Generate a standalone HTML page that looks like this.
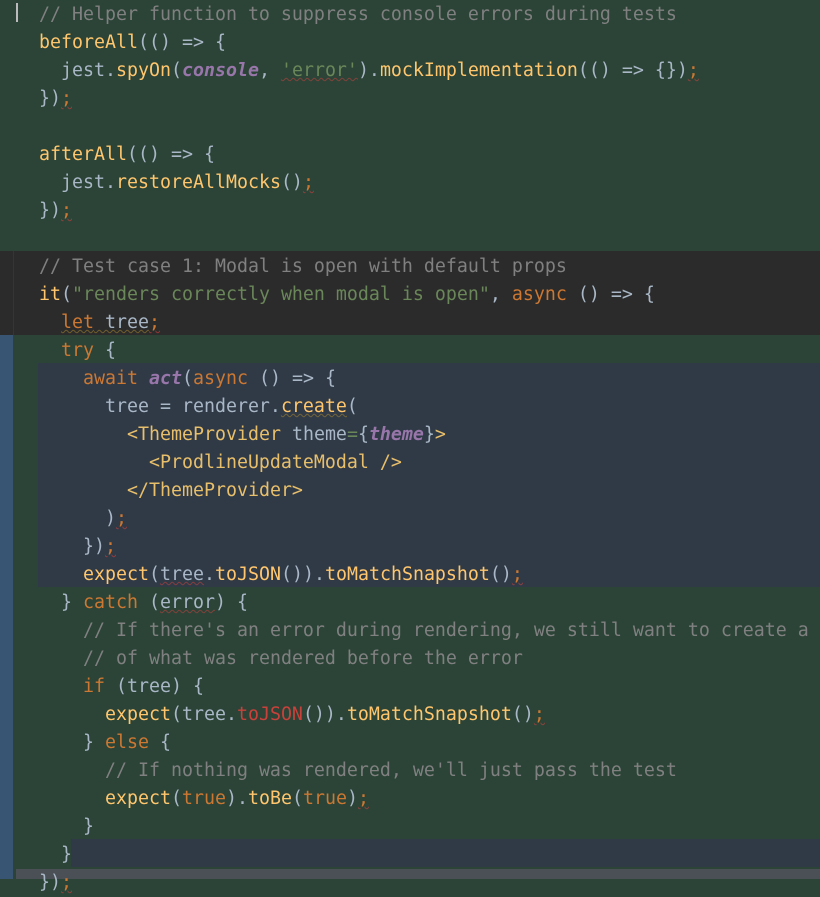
<!DOCTYPE html>
<html><head><meta charset="utf-8"><style>
html,body{margin:0;padding:0;width:820px;height:879px;overflow:hidden;background:#2b4437;}
.bg{position:absolute;}
pre{position:absolute;left:39px;top:1px;margin:0;font-family:"DejaVu Sans Mono","Liberation Mono",monospace;font-size:18.27px;line-height:28px;color:#a9b7c6;white-space:pre;}
.c{color:#808080}.f{color:#ffc66d}.k{color:#cc7832}.s{color:#6a8759}.p{color:#9876aa;font-style:italic;font-weight:bold}
.t{color:#e8bf6a}.r{color:#c8413a}.sc{color:#cc7832;text-decoration:underline wavy rgba(188,63,60,0.7);text-decoration-thickness:1px}
.w{text-decoration:underline wavy rgba(188,63,60,0.6);text-decoration-thickness:1px}
.wy{text-decoration:underline wavy rgba(160,128,48,0.6);text-decoration-thickness:1px}
</style></head><body>
<div class="bg" style="left:0;top:251px;width:820px;height:84px;background:#2b2b2b"></div>
<div class="bg" style="left:13px;top:251px;width:1px;height:84px;background:#353535"></div>
<div class="bg" style="left:0;top:335px;width:13px;height:544px;background:#385573"></div>
<div class="bg" style="left:38px;top:363px;width:782px;height:224px;background:#303a47"></div>
<div class="bg" style="left:71px;top:839px;width:749px;height:28px;background:#303a47"></div>
<div class="bg" style="left:16px;top:869px;width:804px;height:10px;background:#4b5057"></div>
<div class="bg" style="left:16px;top:3px;width:2px;height:19px;background:#bbbbbb"></div>
<pre><span class="c">// Helper function to suppress console errors during tests</span>
<span class="f">beforeAll</span>(() => {
  jest.<span class="f">spyOn</span>(<span class="p">console</span>, <span class="s w">'error'</span>).<span class="f">mockImplementation</span>(() => {})<span class="sc">;</span>
})<span class="sc">;</span>

<span class="f">afterAll</span>(() => {
  jest.<span class="f">restoreAllMocks</span>()<span class="sc">;</span>
})<span class="sc">;</span>

<span class="c">// Test case 1: Modal is open with default props</span>
<span class="f">it</span>(<span class="s">"renders correctly when modal is open"</span>, <span class="k">async</span> () => {
  <span class="k wy">let</span><span class="wy"> tree</span><span class="sc">;</span>
  <span class="k">try</span> {
    <span class="k">await</span> <span class="p">act</span>(<span class="k">async</span> () => {
      tree = renderer.<span class="f wy">create</span>(
        <span class="t">&lt;ThemeProvider</span> theme<span class="s">=</span>{<span class="p">theme</span>}<span class="t">&gt;</span>
          <span class="t">&lt;ProdlineUpdateModal /&gt;</span>
        <span class="t">&lt;/ThemeProvider&gt;</span>
      )<span class="sc">;</span>
    })<span class="sc">;</span>
    <span class="f">expect</span>(<span class="w">tree</span>.<span class="f">toJSON</span>()).<span class="f">toMatchSnapshot</span>()<span class="sc">;</span>
  } <span class="k">catch</span> (<span class="w">error</span>) {
    <span class="c">// If there's an error during rendering, we still want to create a</span>
    <span class="c">// of what was rendered before the error</span>
    <span class="k">if</span> (tree) {
      <span class="f">expect</span>(tree.<span class="r">toJSON</span>()).<span class="f">toMatchSnapshot</span>()<span class="sc">;</span>
    } <span class="k">else</span> {
      <span class="c">// If nothing was rendered, we'll just pass the test</span>
      <span class="f">expect</span>(<span class="k">true</span>).<span class="f">toBe</span>(<span class="k">true</span>)<span class="sc">;</span>
    }
  }
})<span class="sc">;</span></pre>
</body></html>
